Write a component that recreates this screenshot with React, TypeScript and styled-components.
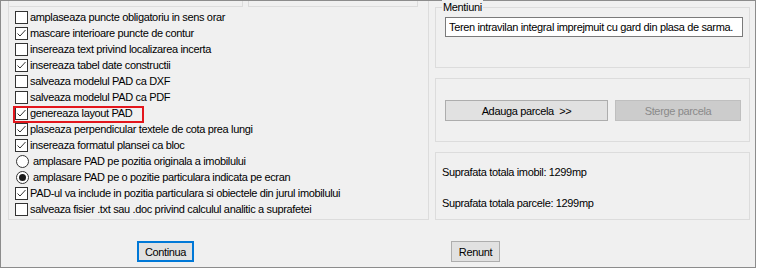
import styled, { createGlobalStyle } from 'styled-components';

const GlobalStyle = createGlobalStyle`
  body {
    margin: 0;
    background: #ffffff;
    font-family: "Liberation Sans", Arial, sans-serif;
    font-size: 11px;
    letter-spacing: -0.35px;
    color: #000;
  }
`;

const Window = styled.div`
  width: 756px;
  height: 268px;
  box-sizing: border-box;
  border: 1px solid #8c8c8c;
  background: #f0f0f0;
  display: flex;
  flex-direction: column;
`;

const Main = styled.div`
  display: flex;
  gap: 6px;
  padding-left: 7px;
`;

const OptionsGroup = styled.div`
  width: 421px;
  height: 219px;
  box-sizing: border-box;
  border: 1px solid #dcdcdc;
  border-top: none;
  display: flex;
  flex-direction: column;
`;

const TopStrip = styled.div`
  display: flex;
  gap: 5px;
  height: 6px;
  margin-bottom: 2px;
`;

const StubBox = styled.div<{ $width: number; $first?: boolean }>`
  width: ${(p) => p.$width}px;
  box-sizing: border-box;
  border: 1px solid #dcdcdc;
  border-top: none;
  border-left-color: ${(p) => (p.$first ? 'transparent' : '#dcdcdc')};
`;

const OptionList = styled.div`
  display: flex;
  flex-direction: column;
  padding-left: 6px;
`;

const Row = styled.label`
  position: relative;
  display: flex;
  align-items: center;
  height: 16px;
  line-height: 16px;
  white-space: nowrap;
`;

const Box = styled.span`
  width: 13px;
  height: 13px;
  box-sizing: border-box;
  border: 1px solid #333333;
  background: #ffffff;
  margin-right: 2px;
  display: flex;
  align-items: center;
  justify-content: center;
  flex: none;
`;

const Radio = styled.span<{ $on: boolean }>`
  width: 13px;
  height: 13px;
  box-sizing: border-box;
  border: 1px solid #333333;
  border-radius: 50%;
  background: #ffffff;
  margin-left: 1px;
  margin-right: 4px;
  display: flex;
  align-items: center;
  justify-content: center;
  flex: none;
  &::after {
    content: '';
    width: 7px;
    height: 7px;
    border-radius: 50%;
    background: ${(p) => (p.$on ? '#1a1a1a' : 'transparent')};
  }
`;

const Highlight = styled.span`
  position: absolute;
  left: -2px;
  top: 1px;
  width: 131px;
  height: 17px;
  box-sizing: border-box;
  border: 2px solid #e3161c;
  pointer-events: none;
`;

const Side = styled.div`
  width: 315px;
  display: flex;
  flex-direction: column;
  padding-top: 6px;
`;

const Group = styled.div<{ $height: number; $gap?: number }>`
  position: relative;
  height: ${(p) => p.$height}px;
  box-sizing: border-box;
  border: 1px solid #dcdcdc;
  margin-bottom: ${(p) => p.$gap ?? 0}px;
`;

const Legend = styled.span`
  position: absolute;
  top: -8px;
  left: 6px;
  padding: 0 1px;
  line-height: 14px;
  background: #f0f0f0;
`;

const NoteField = styled.input`
  display: block;
  margin: 9px 0 0 9px;
  width: 298px;
  height: 20px;
  box-sizing: border-box;
  border: 1px solid #7a7a7a;
  background: #ffffff;
  padding: 0 3px;
  font-family: inherit;
  font-size: 11px;
  letter-spacing: inherit;
  color: #000;
  outline: none;
`;

const ButtonRow = styled.div`
  display: flex;
  gap: 7px;
  padding: 21px 0 0 9px;
`;

const Button = styled.button<{ $width: number; $disabled?: boolean; $default?: boolean }>`
  width: ${(p) => p.$width}px;
  height: 21px;
  box-sizing: border-box;
  padding: 0;
  font-family: inherit;
  font-size: 11px;
  letter-spacing: inherit;
  color: ${(p) => (p.$disabled ? '#8a8a8a' : '#000')};
  background: ${(p) => (p.$disabled ? '#cccccc' : '#e1e1e1')};
  border: 1px solid ${(p) => (p.$default ? '#0078d7' : p.$disabled ? '#bfbfbf' : '#adadad')};
  box-shadow: ${(p) => (p.$default ? 'inset 0 0 0 1px #0078d7' : 'none')};
`;

const InfoLines = styled.div`
  display: flex;
  flex-direction: column;
  gap: 15px;
  padding: 11px 0 0 6px;
  line-height: 16px;
`;

const Footer = styled.div`
  display: flex;
  padding-top: 21px;
`;

const FooterButton = styled(Button)<{ $left: number }>`
  margin-left: ${(p) => p.$left}px;
`;

const Check = () => (
  <svg width="11" height="11" viewBox="0 0 11 11">
    <path d="M1.5 5.5 L4 8 L9.5 2" fill="none" stroke="#333" strokeWidth="1" />
  </svg>
);

type Opt = { text: string; kind: 'check' | 'radio'; on: boolean; mark?: boolean };

const options: Opt[] = [
  { text: 'amplaseaza puncte obligatoriu in sens orar', kind: 'check', on: false },
  { text: 'mascare interioare puncte de contur', kind: 'check', on: true },
  { text: 'insereaza text privind localizarea incerta', kind: 'check', on: false },
  { text: 'insereaza tabel date constructii', kind: 'check', on: true },
  { text: 'salveaza modelul PAD ca DXF', kind: 'check', on: false },
  { text: 'salveaza modelul PAD ca PDF', kind: 'check', on: false },
  { text: 'genereaza layout PAD', kind: 'check', on: true, mark: true },
  { text: 'plaseaza perpendicular textele de cota prea lungi', kind: 'check', on: true },
  { text: 'insereaza formatul plansei ca bloc', kind: 'check', on: true },
  { text: 'amplasare PAD pe pozitia originala a imobilului', kind: 'radio', on: false },
  { text: 'amplasare PAD pe o pozitie particulara indicata pe ecran', kind: 'radio', on: true },
  { text: 'PAD-ul va include in pozitia particulara si obiectele din jurul imobilului', kind: 'check', on: true },
  { text: 'salveaza fisier .txt sau .doc privind calculul analitic a suprafetei', kind: 'check', on: false },
];

const App = () => {
  return (
    <>
      <GlobalStyle />
      <Window>
        <Main>
          <OptionsGroup>
            <TopStrip>
              <StubBox $width={234} $first />
              <StubBox $width={170} />
            </TopStrip>
            <OptionList>
              {options.map((o) => (
                <Row key={o.text}>
                  {o.kind === 'check' ? <Box>{o.on && <Check />}</Box> : <Radio $on={o.on} />}
                  {o.text}
                  {o.mark && <Highlight />}
                </Row>
              ))}
            </OptionList>
          </OptionsGroup>
          <Side>
            <Group $height={61} $gap={10}>
              <Legend>Mentiuni</Legend>
              <NoteField readOnly value="Teren intravilan integral imprejmuit cu gard din plasa de sarma." />
            </Group>
            <Group $height={64} $gap={10}>
              <ButtonRow>
                <Button $width={163}>Adauga parcela&nbsp;&nbsp;&gt;&gt;</Button>
                <Button $width={126} $disabled>Sterge parcela</Button>
              </ButtonRow>
            </Group>
            <Group $height={68}>
              <InfoLines>
                <span>Suprafata totala imobil: 1299mp</span>
                <span>Suprafata totala parcele: 1299mp</span>
              </InfoLines>
            </Group>
          </Side>
        </Main>
        <Footer>
          <FooterButton $left={136} $width={57} $default>Continua</FooterButton>
          <FooterButton $left={257} $width={49}>Renunt</FooterButton>
        </Footer>
      </Window>
    </>
  );
};

export default App;
